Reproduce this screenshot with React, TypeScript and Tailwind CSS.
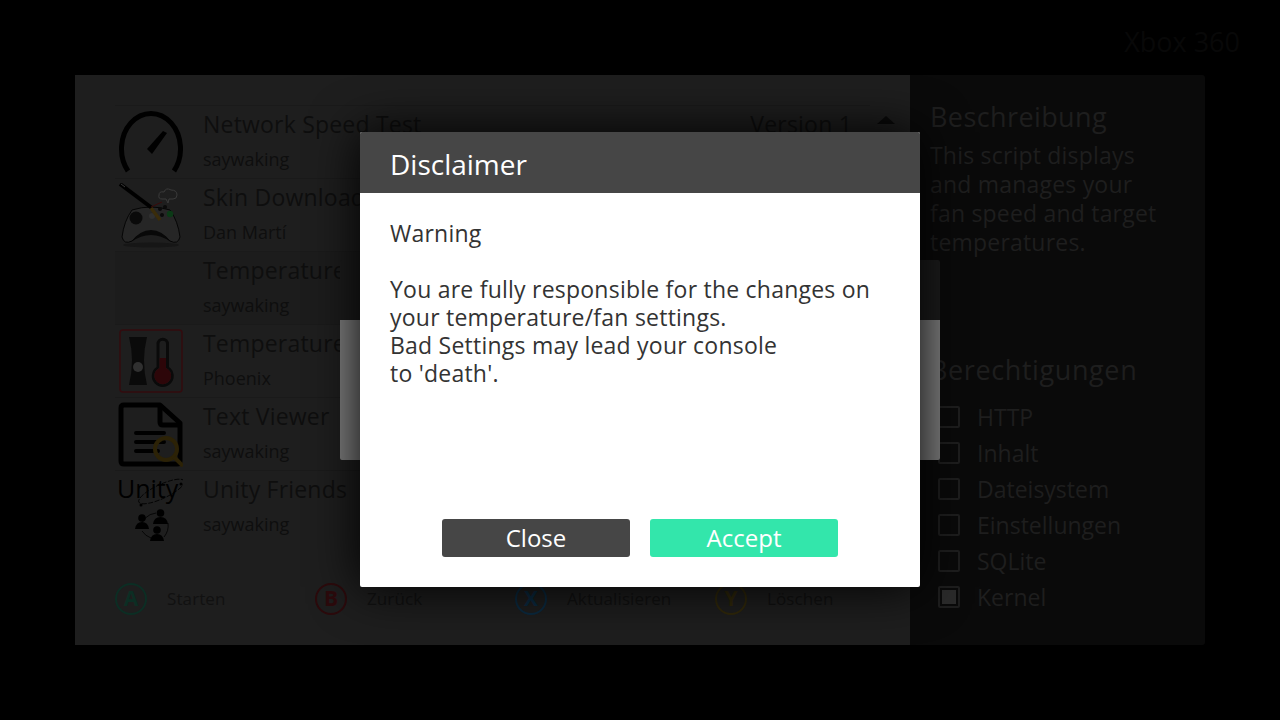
const font = '[font-family:"Open_Sans",sans-serif]';

const apps = [
  { name: 'Network Speed Test', author: 'saywaking', icon: 'speed', version: 'Version 1' },
  { name: 'Skin Downloader', author: 'Dan Martí', icon: 'pad' },
  { name: 'Temperature', author: 'saywaking', icon: 'none', selected: true },
  { name: 'Temperature', author: 'Phoenix', icon: 'temp' },
  { name: 'Text Viewer', author: 'saywaking', icon: 'text' },
  { name: 'Unity Friends', author: 'saywaking', icon: 'unity' },
];

const perms = [
  { label: 'HTTP' },
  { label: 'Inhalt' },
  { label: 'Dateisystem' },
  { label: 'Einstellungen' },
  { label: 'SQLite' },
  { label: 'Kernel', checked: true },
];

const legend = [
  { key: 'A', label: 'Starten', ring: 'border-[#0c2e24]', text: 'text-[#0c2e24]' },
  { key: 'B', label: 'Zurück', ring: 'border-[#2c0a0c]', text: 'text-[#2c0a0c]' },
  { key: 'X', label: 'Aktualisieren', ring: 'border-[#0b2a40]', text: 'text-[#0b2a40]' },
  { key: 'Y', label: 'Löschen', ring: 'border-[#30280a]', text: 'text-[#30280a]' },
];

function AppIcon({ type }: { type: string }) {
  if (type === 'speed') {
    return (
      <svg viewBox="0 0 65 65" className="w-[65px] h-[65px]">
        <path d="M10 61 A29.5 35.4 0 1 1 56 61" fill="none" stroke="#000" strokeWidth="5" />
        <path d="M45 21 L49 23 L34 44 L29 39 Z" fill="#000" />
      </svg>
    );
  }
  if (type === 'pad') {
    return (
      <svg viewBox="0 0 65 65" className="w-[65px] h-[65px]">
        <ellipse cx="33" cy="62" rx="28" ry="2.5" fill="#161616" />
        <path d="M14 27 Q33 21 52 27 Q60 38 62 54 Q60 62 52 58 Q44 49 33 49 Q22 49 14 58 Q6 62 4 54 Q6 38 14 27 Z" fill="#262626" stroke="#050505" strokeWidth="1" />
        <path d="M13 59 Q22 47 33 47 Q44 47 53 59 Q43 52 33 52 Q23 52 13 59 Z" fill="#080808" />
        <circle cx="18" cy="35" r="6.5" fill="#0a0a0a" />
        <circle cx="34" cy="33" r="3" fill="#303030" />
        <circle cx="42" cy="26" r="2" fill="#0a0a0a" />
        <circle cx="47" cy="24" r="2" fill="#0a0a0a" />
        <circle cx="52" cy="31" r="3.2" fill="#0b3a16" />
        <circle cx="44" cy="32" r="2" fill="#0a0a0a" />
        <path d="M2 1 L34 25" fill="none" stroke="#000" strokeWidth="4" />
        <path d="M3 1 L7 4" stroke="#3a3a3a" strokeWidth="1" />
        <path d="M33 25 L42 37" stroke="#3a2c0a" strokeWidth="3.5" />
        <path d="M33 24 L44 19" stroke="#3a0a0a" strokeWidth="1" />
        <path d="M44 16 Q40 16 41 12 Q41 8 46 9 Q48 4 53 7 Q59 7 59 12 Q59 16 55 16 L51 16 L50 20 L48 16 Z" fill="none" stroke="#3a3a3a" strokeWidth="1" />
      </svg>
    );
  }
  if (type === 'temp') {
    return (
      <svg viewBox="0 0 65 65" className="w-[65px] h-[65px]">
        <rect x="2" y="1" width="62" height="62" rx="3" fill="none" stroke="#330b0e" strokeWidth="1.5" />
        <path d="M11 8 H29 Q26 20 26 31 Q26 44 29 56 H11 Q14 44 14 31 Q14 20 11 8 Z" fill="#0a0a0a" />
        <circle cx="20" cy="38" r="5" fill="#303030" />
        <path d="M38.5 38 V15 A6.2 6.2 0 0 1 51 15 V38 A11 11 0 1 1 38.5 38 Z" fill="#0a0a0a" />
        <path d="M41.5 39 V15 A3.2 3.2 0 0 1 48 15 V39 A8.4 8.4 0 1 1 41.5 39 Z" fill="#1e1e1e" />
        <path d="M41.5 29 H48 V39 A8.4 8.4 0 1 1 41.5 39 Z" fill="#2d0609" />
      </svg>
    );
  }
  if (type === 'text') {
    return (
      <svg viewBox="0 0 65 65" className="w-[65px] h-[65px]">
        <path d="M3 6 Q3 3 6 3 H42 L62 21 V59 Q62 62 59 62 H6 Q3 62 3 59 Z" fill="none" stroke="#000" strokeWidth="5" strokeLinejoin="round" />
        <path d="M42 3 V20 Q42 23 45 23 H62" fill="none" stroke="#000" strokeWidth="5" />
        <path d="M18 31 H46 M18 40 H46 M18 49 H40" stroke="#000" strokeWidth="4" strokeLinecap="round" />
        <circle cx="48" cy="47" r="11" fill="none" stroke="#2c2206" strokeWidth="4" />
        <path d="M56 55 L65 64" stroke="#2c2206" strokeWidth="4" />
      </svg>
    );
  }
  if (type === 'unity') {
    return (
      <div className="relative w-[65px] h-[70px]">
        <span className={`${font} absolute left-[-1px] top-[-4px] text-[25px] leading-[34px] text-black`}>Unity</span>
        <svg viewBox="0 0 65 70" className="absolute inset-0 w-[65px] h-[70px]">
          <ellipse cx="43.5" cy="16.5" rx="25" ry="7" transform="rotate(-25 43.5 16.5)" fill="none" stroke="#000" strokeWidth="0.8" strokeDasharray="5 1.5" />
          <circle cx="23" cy="30" r="1.5" fill="#000" />
          <circle cx="63" cy="9" r="1.5" fill="#000" />
          <path d="M22 54 A18 18 0 0 1 38 38 M50 48 A18 18 0 0 1 46 62 M24 56 A18 18 0 0 0 33 63" fill="none" stroke="#000" strokeWidth="0.8" />
          <g fill="#000">
            <circle cx="42.5" cy="38" r="3.8" />
            <path d="M35 49 Q36 42 42.5 42 Q49 42 50 49 Z" />
            <circle cx="24" cy="43" r="3.8" />
            <path d="M17 54 Q18 47 24 47 Q30 47 31 54 Z" />
            <circle cx="39" cy="55" r="3.8" />
            <path d="M32 66 Q33 59 39 59 Q45 59 46 66 Z" />
          </g>
        </svg>
      </div>
    );
  }
  return <div className="w-[65px] h-[65px]" />;
}

function AppRow({ app }: { app: (typeof apps)[number] }) {
  return (
    <div className={`h-[73px] flex border-t border-[#1a1a1a] ${app.selected ? 'bg-[#1c1c1c]' : ''}`}>
      <div className="w-[88px] pl-[3px] pt-1 shrink-0">
        <AppIcon type={app.icon} />
      </div>
      <div className="flex-1 min-w-0">
        <div className="flex justify-between pr-[18px] h-[36px] items-center text-[23px] tracking-[0.2px] text-[#0e0e0e]">
          <span>{app.name}</span>
          {app.version && <span>{app.version}</span>}
        </div>
        <div className="mt-1 text-[18px] leading-[26px] text-[#0e0e0e]">{app.author}</div>
      </div>
    </div>
  );
}

export default function App() {
  return (
    <div className={`${font} relative w-[1280px] h-[720px] bg-black overflow-hidden`}>
      <div className="h-[75px] flex justify-end pr-[40px] pt-[24px] text-[27px] leading-[36px] text-[#080808]">
        Xbox 360
      </div>

      <div className="ml-[75px] w-[1130px] h-[570px] flex">
        <div className="relative w-[835px] bg-[#1e1e1e] pl-10 pr-10 pt-[30px]">
          <div className="absolute right-[15px] top-[41px] w-0 h-0 border-x-[9px] border-x-transparent border-b-[8px] border-b-[#0a0a0a]" />
          {apps.map((app, i) => (
            <AppRow key={i} app={app} />
          ))}
          <div className="flex w-[800px] mt-[40px]">
            {legend.map((l) => (
              <div key={l.key} className="w-[200px] flex items-center">
                <div className={`w-8 h-8 rounded-full border-2 flex items-center justify-center text-[21px] font-bold ${l.ring} ${l.text}`}>
                  {l.key}
                </div>
                <span className="ml-[20px] text-[17px] tracking-[0.1px] text-[#111111]">{l.label}</span>
              </div>
            ))}
          </div>
        </div>

        <div className="w-[295px] bg-[#0a0a0a] pl-5 pt-[23px] rounded-r-[3px]">
          <div className="text-[27px] leading-[38px] tracking-[0.4px] text-[#1e1e1e]">Beschreibung</div>
          <div className="mt-[5px] text-[23px] leading-[29px] tracking-[0.2px] text-[#1e1e1e] w-[235px]">
            This script displays and manages your fan speed and target temperatures.
          </div>
          <div className="mt-[94px] text-[27px] leading-[38px] tracking-[0.6px] text-[#1e1e1e]">Berechtigungen</div>
          <div className="mt-[10px] flex flex-col">
            {perms.map((p) => (
              <div key={p.label} className="h-9 flex items-center pl-[8px]">
                <div className="w-[22px] h-[22px] border-2 border-[#1e1e1e] rounded-[2px] p-[2px]">
                  {p.checked && <div className="w-full h-full bg-[#2b2b2b]" />}
                </div>
                <span className="ml-[17px] text-[23px] text-[#1e1e1e]">{p.label}</span>
              </div>
            ))}
          </div>
        </div>
      </div>

      {/* dialog behind the front one */}
      <div className="absolute left-[340px] top-[260px] w-[600px] h-[200px] rounded-[2px] overflow-hidden">
        <div className="h-[60px] bg-[#1c1c1c]" />
        <div className="h-[140px] bg-[#808080]" />
      </div>

      <div className="absolute left-[360px] top-[132px] w-[560px] h-[455px] rounded-[2px] bg-white flex flex-col shadow-[0_0_50px_rgba(0,0,0,1)]">
        <div className="h-[61px] bg-[#464646] rounded-t-[2px] pl-[30px] pt-[2px] flex items-center text-[28px] text-white">
          Disclaimer
        </div>
        <div className="flex-1 pl-[30px] pt-[26px] text-[23px] leading-[28px] tracking-[0.23px] text-[#333333]">
          Warning
          <br />
          <br />
          You are fully responsible for the changes on
          <br />
          your temperature/fan settings.
          <br />
          Bad Settings may lead your console
          <br />
          to 'death'.
        </div>
        <div className="flex justify-center gap-5 pb-[30px]">
          <div className="w-[188px] h-[38px] rounded-[3px] bg-[#464646] text-white text-[24px] flex items-center justify-center">
            Close
          </div>
          <div className="w-[188px] h-[38px] rounded-[3px] bg-[#33e6ab] text-white text-[24px] flex items-center justify-center">
            Accept
          </div>
        </div>
      </div>
    </div>
  );
}
